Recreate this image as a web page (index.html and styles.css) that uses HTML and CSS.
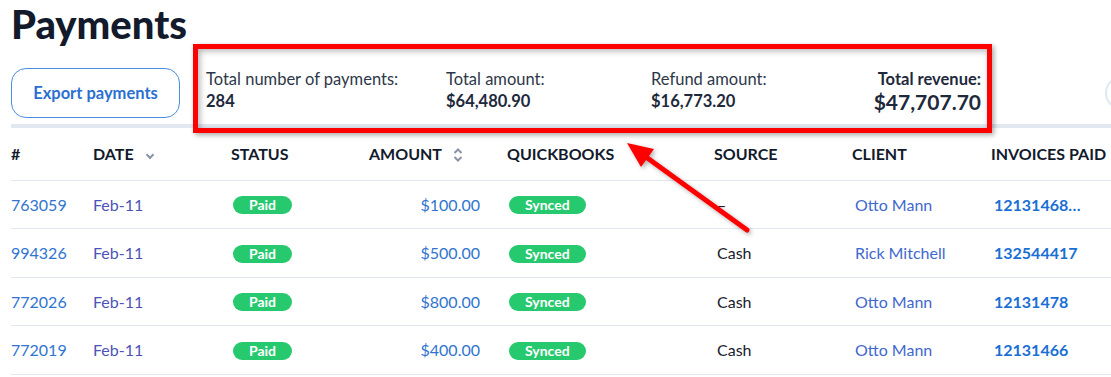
FILE: index.html
```html
<!DOCTYPE html>
<html lang="en">
<head>
    <meta charset="UTF-8">
    <meta name="viewport" content="width=device-width, initial-scale=1.0">
    <title>Payments</title>
    <link rel="stylesheet" href="styles.css">
</head>
<body>
    <div class="page">
        <h1 class="title">Payments</h1>

        <div class="toolbar">
            <button class="btn-export">Export payments</button>
            <div class="stats">
                <div class="stat">
                    <span class="stat-label">Total number of payments:</span>
                    <span class="stat-value">284</span>
                </div>
                <div class="stat">
                    <span class="stat-label">Total amount:</span>
                    <span class="stat-value">$64,480.90</span>
                </div>
                <div class="stat">
                    <span class="stat-label">Refund amount:</span>
                    <span class="stat-value">$16,773.20</span>
                </div>
                <div class="stat stat-total">
                    <span class="stat-label">Total revenue:</span>
                    <span class="stat-value">$47,707.70</span>
                </div>
            </div>
            <span class="round-btn"></span>
        </div>

        <table class="payments">
            <thead>
                <tr>
                    <th class="col-id">#</th>
                    <th class="col-date">Date <span class="sort-down"></span></th>
                    <th class="col-status">Status</th>
                    <th class="col-amount">Amount
                        <svg class="sort-icon" width="10" height="14" viewBox="0 0 10 14"><path d="M1.5 5 L5 1.5 L8.5 5 M1.5 9 L5 12.5 L8.5 9" fill="none" stroke="#8a94a6" stroke-width="2"/></svg>
                    </th>
                    <th class="col-qb">Quickbooks</th>
                    <th class="col-source">Source</th>
                    <th class="col-client">Client</th>
                    <th class="col-invoices">Invoices paid</th>
                </tr>
            </thead>
            <tbody>
                <tr>
                    <td class="cell-id">763059</td>
                    <td class="cell-date">Feb-11</td>
                    <td><span class="badge">Paid</span></td>
                    <td class="cell-amount">$100.00</td>
                    <td><span class="badge">Synced</span></td>
                    <td class="cell-source">&ndash;</td>
                    <td class="cell-client">Otto Mann</td>
                    <td class="cell-invoices">12131468, 12131469</td>
                </tr>
                <tr>
                    <td class="cell-id">994326</td>
                    <td class="cell-date">Feb-11</td>
                    <td><span class="badge">Paid</span></td>
                    <td class="cell-amount">$500.00</td>
                    <td><span class="badge">Synced</span></td>
                    <td class="cell-source">Cash</td>
                    <td class="cell-client">Rick Mitchell</td>
                    <td class="cell-invoices">132544417</td>
                </tr>
                <tr>
                    <td class="cell-id">772026</td>
                    <td class="cell-date">Feb-11</td>
                    <td><span class="badge">Paid</span></td>
                    <td class="cell-amount">$800.00</td>
                    <td><span class="badge">Synced</span></td>
                    <td class="cell-source">Cash</td>
                    <td class="cell-client">Otto Mann</td>
                    <td class="cell-invoices">12131478</td>
                </tr>
                <tr>
                    <td class="cell-id">772019</td>
                    <td class="cell-date">Feb-11</td>
                    <td><span class="badge">Paid</span></td>
                    <td class="cell-amount">$400.00</td>
                    <td><span class="badge">Synced</span></td>
                    <td class="cell-source">Cash</td>
                    <td class="cell-client">Otto Mann</td>
                    <td class="cell-invoices">12131466</td>
                </tr>
            </tbody>
        </table>

        <!-- annotation overlay -->
        <div class="highlight"></div>
        <svg class="arrow" width="1111" height="377" viewBox="0 0 1111 377">
            <line x1="747" y1="230" x2="646" y2="157" stroke="#ff0000" stroke-width="5" stroke-linecap="round"/>
            <polygon points="627,143 654,149 641,167" fill="#ff0000"/>
        </svg>
    </div>
</body>
</html>
```

FILE: styles.css
```css
* {
    margin: 0;
    padding: 0;
    box-sizing: border-box;
}

html, body {
    width: 1111px;
    height: 377px;
    overflow: hidden;
}

body {
    font-family: Lato, "Open Sans", sans-serif;
    background-color: #ffffff;
    color: #1a202c;
}

.page {
    position: relative;
    padding-left: 11px;
    width: 1140px;
}

.title {
    font-size: 40px;
    font-weight: 900;
    color: #121a2c;
    line-height: 48px;
    height: 56px;
}

.toolbar {
    display: flex;
    align-items: center;
    height: 72px;
    padding-top: 5px;
    border-bottom: 4px solid #e2e8f0;
}

.btn-export {
    width: 169px;
    height: 50px;
    border: 1px solid #4a8ee0;
    border-radius: 15px;
    background: #ffffff;
    color: #2b6fd1;
    font-family: inherit;
    font-size: 16.5px;
    font-weight: 700;
}

.stats {
    display: grid;
    grid-template-columns: 240px 205px 1fr auto;
    width: 775px;
    margin-left: 26px;
    margin-top: -3px;
    color: #2d3748;
}

.stat {
    display: flex;
    flex-direction: column;
}

.stat-label {
    font-size: 16.5px;
    line-height: 22px;
}

.stat-value {
    font-size: 16.5px;
    font-weight: 700;
    line-height: 23px;
    color: #1e293b;
}

.stat-total {
    align-items: flex-end;
}

.stat-total .stat-label {
    font-weight: 700;
    color: #1e293b;
}

.stat-total .stat-value {
    font-size: 21px;
    line-height: 24px;
}

.round-btn {
    flex: none;
    width: 34px;
    height: 34px;
    margin-left: 124px;
    border: 2px solid #e2e8f0;
    border-radius: 50%;
}

.payments {
    border-collapse: collapse;
    table-layout: fixed;
    width: 1129px;
}

.payments th {
    height: 52px;
    text-align: left;
    font-size: 16px;
    font-weight: 700;
    text-transform: uppercase;
    color: #121a2c;
    border-bottom: 1px solid #e2e8f0;
    white-space: nowrap;
}

.payments td {
    height: 48.5px;
    font-size: 16px;
    border-bottom: 1px solid #e2e8f0;
    white-space: nowrap;
}

.col-id { width: 82px; }
.col-date { width: 138px; }
.col-status { width: 138px; }
.col-amount { width: 138px; }
.col-qb { width: 207px; }
.col-source { width: 138px; }
.col-client { width: 139px; }
.col-invoices { width: 149px; }

.sort-down {
    display: inline-block;
    width: 6px;
    height: 6px;
    margin-left: 10px;
    border-right: 2px solid #8a94a6;
    border-bottom: 2px solid #8a94a6;
    transform: translateY(-2px) rotate(45deg);
}

.sort-icon {
    margin-left: 8px;
    vertical-align: -2px;
}

.cell-id {
    color: #2f74d0;
}

.cell-date {
    color: #4d52b8;
}

.cell-amount {
    color: #2f74d0;
    text-align: right;
    padding-right: 27px;
}

.cell-source {
    color: #1a202c;
    padding-left: 3px;
}

.cell-client {
    color: #3f68cf;
    padding-left: 3px;
}

.cell-invoices {
    color: #1a6fd4;
    font-weight: 700;
    padding-left: 3px;
    padding-right: 57px;
    overflow: hidden;
    text-overflow: ellipsis;
}

.badge {
    display: inline-block;
    height: 18px;
    line-height: 18px;
    padding: 0 16px;
    margin-left: 2px;
    border-radius: 9px;
    background-color: #27c96f;
    color: #ffffff;
    font-size: 14px;
    font-weight: 700;
}

.highlight {
    position: absolute;
    left: 193px;
    top: 44px;
    width: 799px;
    height: 89px;
    border: 5px solid #ff0000;
    box-shadow: 2px 2px 5px rgba(0, 0, 0, 0.35), inset 2px 2px 6px rgba(0, 0, 0, 0.3);
    pointer-events: none;
}

.arrow {
    position: absolute;
    left: 0;
    top: 0;
    pointer-events: none;
    filter: drop-shadow(2px 2px 2px rgba(0, 0, 0, 0.3));
}
```
